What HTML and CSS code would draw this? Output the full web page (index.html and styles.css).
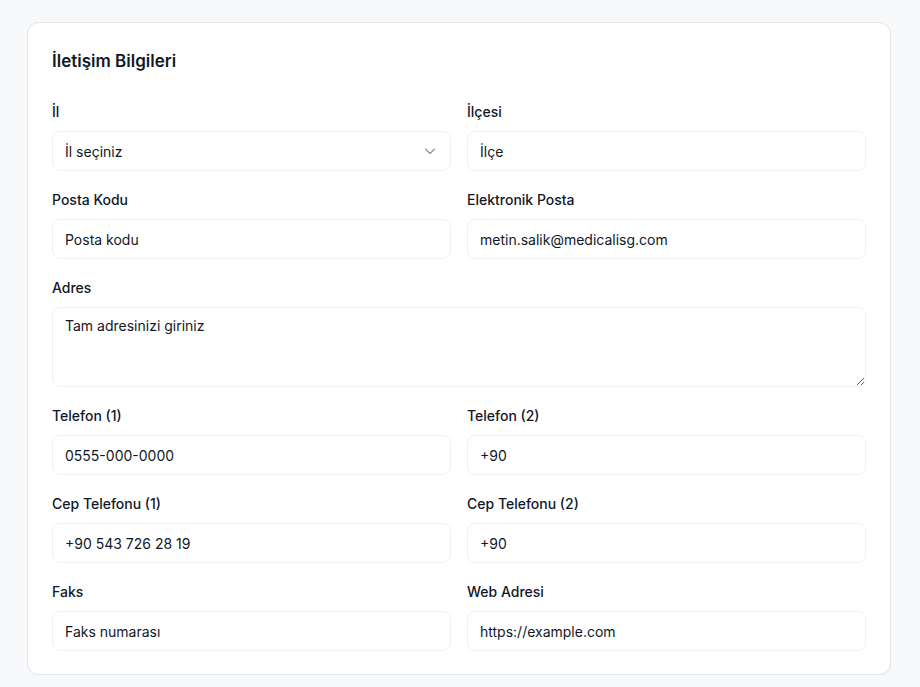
FILE: index.html
```html
<!DOCTYPE html>
<html lang="tr">
<head>
<meta charset="utf-8">
<link rel="stylesheet" href="styles.css">
</head>
<body>
<div class="card">
  <h2 class="title">İletişim Bilgileri</h2>
  <div class="grid">
    <div class="field">
      <label class="label">İl</label>
      <div class="select">
        <span>İl seçiniz</span>
        <svg width="16" height="16" viewBox="0 0 16 16" fill="none"><path d="M3.5 6 8 10.5 12.5 6" stroke="#8a909b" stroke-width="1.1" stroke-linecap="round" stroke-linejoin="round"/></svg>
      </div>
    </div>
    <div class="field">
      <label class="label">İlçesi</label>
      <input class="input" placeholder="İlçe">
    </div>
    <div class="field">
      <label class="label">Posta Kodu</label>
      <input class="input" placeholder="Posta kodu">
    </div>
    <div class="field">
      <label class="label">Elektronik Posta</label>
      <input class="input" value="metin.salik@medicalisg.com">
    </div>
    <div class="field full">
      <label class="label">Adres</label>
      <textarea class="input area" placeholder="Tam adresinizi giriniz"></textarea>
    </div>
    <div class="field">
      <label class="label">Telefon (1)</label>
      <input class="input" value="0555-000-0000">
    </div>
    <div class="field">
      <label class="label">Telefon (2)</label>
      <input class="input" value="+90">
    </div>
    <div class="field">
      <label class="label">Cep Telefonu (1)</label>
      <input class="input" value="+90 543 726 28 19">
    </div>
    <div class="field">
      <label class="label">Cep Telefonu (2)</label>
      <input class="input" value="+90">
    </div>
    <div class="field">
      <label class="label">Faks</label>
      <input class="input" placeholder="Faks numarası">
    </div>
    <div class="field">
      <label class="label">Web Adresi</label>
      <input class="input" placeholder="https://example.com">
    </div>
  </div>
</div>
</body>
</html>
```
FILE: styles.css
```css
* { box-sizing: border-box; }
html, body { margin: 0; }
body {
  background: #f8f9fb;
  font-family: Inter, "Noto Sans", sans-serif;
  color: #111827;
  padding: 22px 29px 0 27px;
}
.card {
  background: #fff;
  border: 1px solid #e3e6eb;
  border-radius: 12px;
  padding: 24px 24px 23px 24px;
  box-shadow: 0 1px 2px rgba(16, 24, 40, 0.04);
}
.title {
  margin: 0 0 27px 0;
  font-size: 17px;
  line-height: 28px;
  font-weight: 600;
  letter-spacing: 0;
}
.grid {
  display: grid;
  grid-template-columns: 1fr 1fr;
  column-gap: 16px;
  row-gap: 19px;
}
.field { display: flex; flex-direction: column; }
.full { grid-column: 1 / -1; }
.label {
  font-size: 14px;
  line-height: 20px;
  font-weight: 500;
  margin-bottom: 9px;
}
.input, .select {
  height: 40px;
  border: 1px solid #f0f1f4;
  border-radius: 8px;
  background: #fff;
  padding: 0 12px;
  font-family: inherit;
  font-size: 14px;
  color: #111827;
  outline: none;
}
.input::placeholder { color: #111827; opacity: 1; }
.select {
  display: flex;
  align-items: center;
  justify-content: space-between;
  padding-right: 12px;
}
.area {
  height: 80px;
  padding: 8px 12px;
  line-height: 20px;
  resize: vertical;
}
```
